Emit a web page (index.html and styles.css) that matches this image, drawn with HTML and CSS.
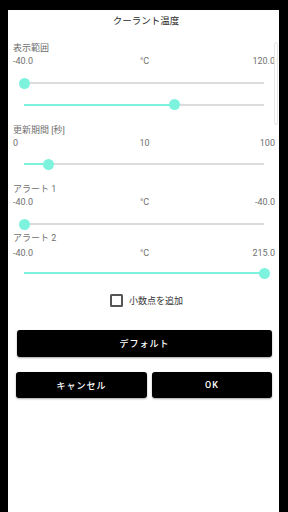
FILE: index.html
```html
<!DOCTYPE html>
<html lang="ja">
<head>
<meta charset="utf-8">
<link rel="stylesheet" href="styles.css">
</head>
<body>
<div class="dialog">
  <div class="title">クーラント温度</div>
  <div class="scrollbar"></div>

  <div class="label l1">表示範囲</div>
  <div class="values"><span>-40.0</span><span class="mid">°C</span><span class="end">120.0</span></div>
  <div class="slider s1"><div class="fill" style="width:0%"></div><div class="thumb" style="left:0%"></div></div>
  <div class="slider s2"><div class="fill" style="width:62.5%"></div><div class="thumb" style="left:62.5%"></div></div>

  <div class="label l2">更新期間 [秒]</div>
  <div class="values v2"><span>0</span><span class="mid">10</span><span class="end">100</span></div>
  <div class="slider s3"><div class="fill" style="width:10%"></div><div class="thumb" style="left:10%"></div></div>

  <div class="label l3">アラート 1</div>
  <div class="values v3"><span>-40.0</span><span class="mid">°C</span><span class="end">-40.0</span></div>
  <div class="slider s4"><div class="fill" style="width:0%"></div><div class="thumb" style="left:0%"></div></div>

  <div class="label l4">アラート 2</div>
  <div class="values v4"><span>-40.0</span><span class="mid">°C</span><span class="end">215.0</span></div>
  <div class="slider s5"><div class="fill" style="width:100%"></div><div class="thumb" style="left:100%"></div></div>

  <div class="check-row">
    <span class="box"></span>
    <span class="check-label">小数点を追加</span>
  </div>

  <div class="btn default">デフォルト</div>
  <div class="btn-row">
    <div class="btn cancel">キャンセル</div>
    <div class="btn ok">OK</div>
  </div>
</div>
</body>
</html>
```

FILE: styles.css
```css
html, body {
  margin: 0;
  padding: 0;
  background: #000;
  height: 512px;
  overflow: hidden;
}
body {
  font-family: Roboto, "Noto Sans CJK JP", sans-serif;
}
.dialog {
  position: relative;
  margin: 10px 0 0 8px;
  width: 271px;
  height: 502px;
  background: #fff;
  box-sizing: border-box;
  padding: 0 4px 0 5px;
}
.title {
  height: 22px;
  line-height: 22px;
  text-align: center;
  font-size: 9.5px;
  color: #2a2a2a;
  padding-left: 4px;
}
.scrollbar {
  position: absolute;
  right: 1px;
  top: 32px;
  width: 2px;
  height: 81px;
  border: 1px solid #e6e6e6;
  border-radius: 2px;
}
.label {
  height: 13px;
  line-height: 13px;
  font-size: 9px;
  color: #707070;
}
.values {
  display: grid;
  grid-template-columns: 1fr auto 1fr;
  height: 13px;
  line-height: 13px;
  font-size: 9px;
  color: #707070;
}
.values .mid { padding-left: 1px; }
.values .end { text-align: right; }
.l1 { margin-top: 9.5px; }
.l2 { margin-top: 18px; }
.l3 { margin-top: 17.5px; }
.l4 { margin-top: 6.5px; }
.v4 { margin-top: 2px; }

.slider {
  position: relative;
  height: 2px;
  margin: 0 11px 0 11px;
  background: #dcdcdc;
}
.fill {
  height: 2px;
  background: #7df3dd;
}
.thumb {
  position: absolute;
  top: -4.5px;
  width: 11px;
  height: 11px;
  margin-left: -5.5px;
  border-radius: 50%;
  background: #7df3dd;
}
.s1 { margin-top: 14.5px; }
.s2 { margin-top: 19.5px; }
.s3 { margin-top: 13.5px; }
.s4 { margin-top: 14.5px; }
.s5 { margin-top: 12.5px; }

.check-row {
  display: flex;
  align-items: center;
  justify-content: center;
  gap: 6px;
  height: 14px;
  margin-top: 19px;
  padding-left: 5px;
}
.box {
  width: 9px;
  height: 9px;
  border: 2px solid #555;
  border-radius: 1.5px;
}
.check-label {
  font-size: 9px;
  color: #333;
}
.btn {
  background: #000;
  color: #fff;
  font-weight: 500;
  font-size: 9px;
  letter-spacing: 1px;
  text-align: center;
  border-radius: 3px;
  box-shadow: 0 1px 2px rgba(0,0,0,0.35);
  display: flex;
  align-items: center;
  justify-content: center;
}
.default {
  height: 27px;
  margin: 23px 3px 0 4px;
}
.btn-row {
  display: flex;
  gap: 5px;
  margin: 15px 3px 0 3px;
}
.cancel { height: 26px; flex: 131 1 0; }
.ok { height: 26px; flex: 120 1 0; }
```
